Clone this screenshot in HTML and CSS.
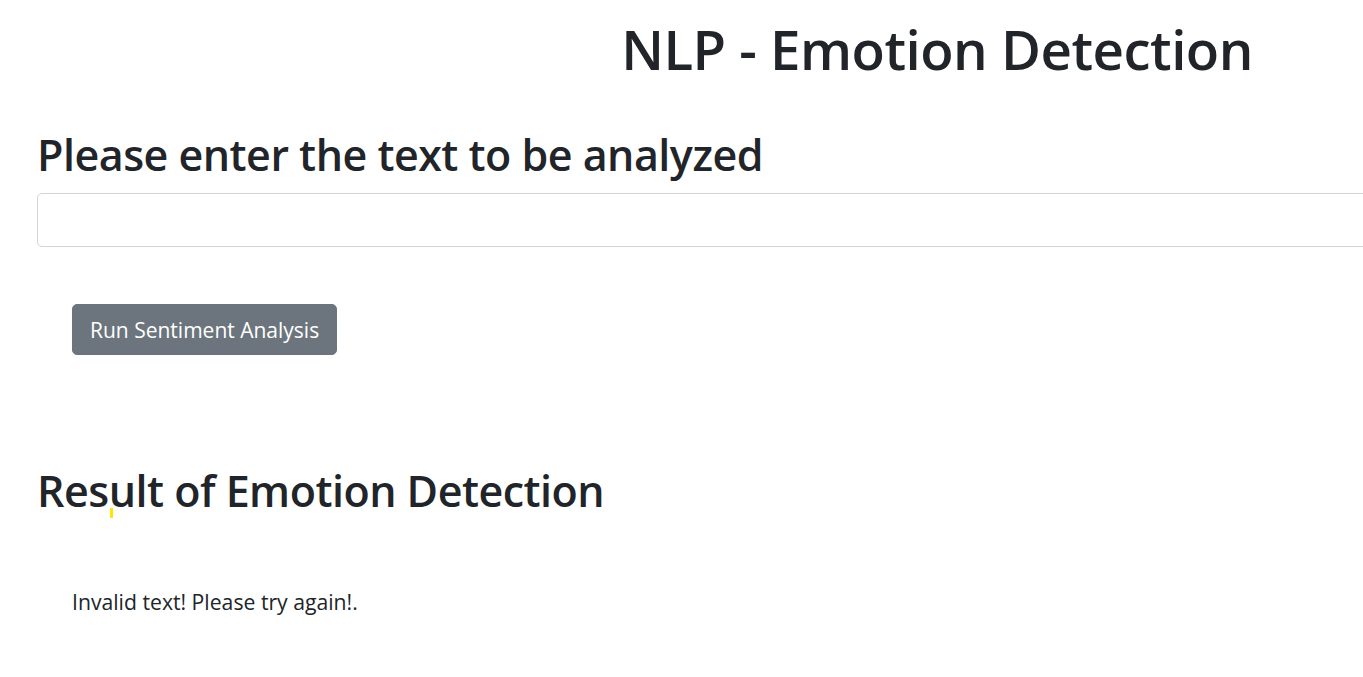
FILE: index.html
```html
<!DOCTYPE html>
<html lang="en">
<head>
<meta charset="utf-8">
<title>NLP - Emotion Detection</title>
<link rel="stylesheet" href="styles.css">
</head>
<body>
<div class="page">
  <h1 class="title">NLP - Emotion Detection</h1>
  <section class="input-section">
    <h2 class="heading">Please enter the text to be analyzed</h2>
    <input class="text-input" type="text" aria-label="Text to analyze">
    <div class="actions">
      <button class="btn" type="button">Run Sentiment Analysis</button>
    </div>
  </section>
  <section class="result">
    <h2 class="heading heading-result">Result of Emotion Detection<span class="caret-mark"></span></h2>
    <p class="result-text">Invalid text! Please try again!.</p>
  </section>
</div>
</body>
</html>
```
FILE: styles.css
```css
html, body {
  margin: 0;
  padding: 0;
  overflow: hidden;
  background: #fff;
}
body {
  font-family: "Open Sans", "Noto Sans", sans-serif;
  color: #212529;
}
.page {
  width: 1800px;
  padding: 0 37px;
}
.title {
  margin: 15px 0 0;
  font-size: 54.6px;
  line-height: 68px;
  font-weight: 600;
  letter-spacing: -0.5px;
  text-align: center;
}
.heading {
  margin: 45px 0 0;
  font-size: 43px;
  line-height: 54px;
  font-weight: 600;
  letter-spacing: -0.5px;
}
.text-input {
  display: block;
  box-sizing: border-box;
  width: 100%;
  height: 54px;
  margin-top: 11px;
  border: 1px solid #ced4da;
  border-radius: 5px;
  background: #fff;
  font: inherit;
}
.actions {
  padding: 57px 0 0 35px;
}
.btn {
  box-sizing: border-box;
  height: 51px;
  padding: 0 17px;
  border: 1px solid #6c757d;
  border-radius: 5px;
  background: #6c757d;
  color: #fff;
  font-family: inherit;
  font-size: 21px;
  line-height: 51px;
}
.result {
  padding-top: 107px;
}
.heading-result {
  position: relative;
  margin: 0;
  line-height: 58px;
}
.caret-mark {
  position: absolute;
  left: 73px;
  top: 46px;
  width: 3px;
  height: 10px;
  background: #ffe600;
}
.result-text {
  margin: 65px 0 0 35px;
  font-size: 21.2px;
  line-height: 33px;
}
```
